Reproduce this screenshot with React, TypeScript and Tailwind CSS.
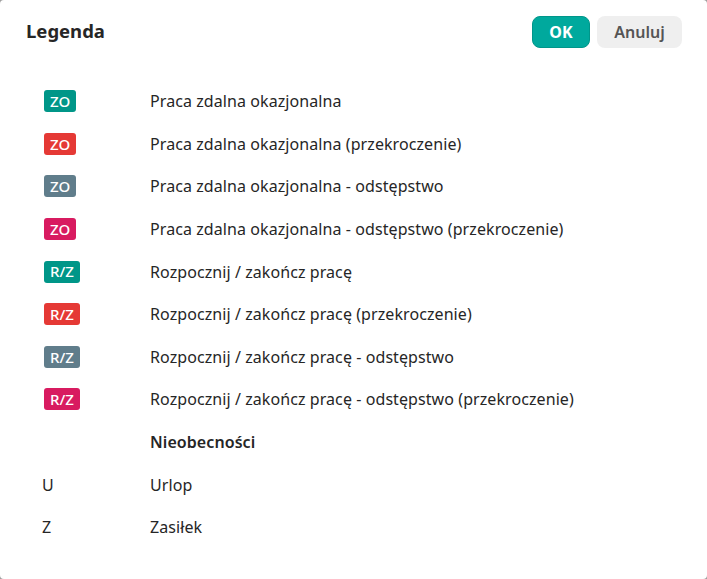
import React from 'react';

type Row = { code?: string; color?: string; letter?: string; label: string; bold?: boolean };

const rows: Row[] = [
  { code: 'ZO', color: 'bg-[#009688]', label: 'Praca zdalna okazjonalna' },
  { code: 'ZO', color: 'bg-[#e53935]', label: 'Praca zdalna okazjonalna (przekroczenie)' },
  { code: 'ZO', color: 'bg-[#607d8b]', label: 'Praca zdalna okazjonalna - odstępstwo' },
  { code: 'ZO', color: 'bg-[#d81b60]', label: 'Praca zdalna okazjonalna - odstępstwo (przekroczenie)' },
  { code: 'R/Z', color: 'bg-[#009688]', label: 'Rozpocznij / zakończ pracę' },
  { code: 'R/Z', color: 'bg-[#e53935]', label: 'Rozpocznij / zakończ pracę (przekroczenie)' },
  { code: 'R/Z', color: 'bg-[#607d8b]', label: 'Rozpocznij / zakończ pracę - odstępstwo' },
  { code: 'R/Z', color: 'bg-[#d81b60]', label: 'Rozpocznij / zakończ pracę - odstępstwo (przekroczenie)' },
  { label: 'Nieobecności', bold: true },
  { letter: 'U', label: 'Urlop' },
  { letter: 'Z', label: 'Zasiłek' },
];

const App: React.FC = () => {
  return (
    <div className="w-[707px] h-[579px] bg-[#9e9e9e]" style={{ fontFamily: '"Noto Sans", sans-serif' }}>
      <div className="w-full h-full bg-white rounded-[4px] text-[#262626]">
        {/* Header */}
        <div className="flex items-center justify-between pl-[26px] pr-[25px] pt-[15px] h-[48px]">
          <h2 className="text-[18.5px] font-bold leading-none">Legenda</h2>
          <div className="flex items-center gap-[7px]">
            <button className="h-[32px] w-[58px] rounded-[8px] bg-[#00a99d] border border-[#00968a] text-white text-[16px] font-bold">
              OK
            </button>
            <button className="h-[32px] w-[85px] rounded-[8px] bg-[#efefef] text-[#555] text-[16px] font-semibold">
              Anuluj
            </button>
          </div>
        </div>

        {/* Legend rows */}
        <div className="pt-[32px]">
          {rows.map((row, i) => (
            <div key={i} className="flex items-center h-[42.6px]">
              <div className="w-[150px] pl-[42px] flex items-center">
                {row.code && (
                  <span
                    className={`${row.color} ml-[2px] h-[22px] px-[6px] rounded-[3px] text-white text-[15px] font-medium flex items-center justify-center`}
                  >
                    {row.code}
                  </span>
                )}
                {row.letter && <span className="text-[16px]">{row.letter}</span>}
              </div>
              <span className={`text-[16px] tracking-[0.08px] ${row.bold ? 'font-semibold' : ''}`}>{row.label}</span>
            </div>
          ))}
        </div>
      </div>
    </div>
  );
};

export default App;
